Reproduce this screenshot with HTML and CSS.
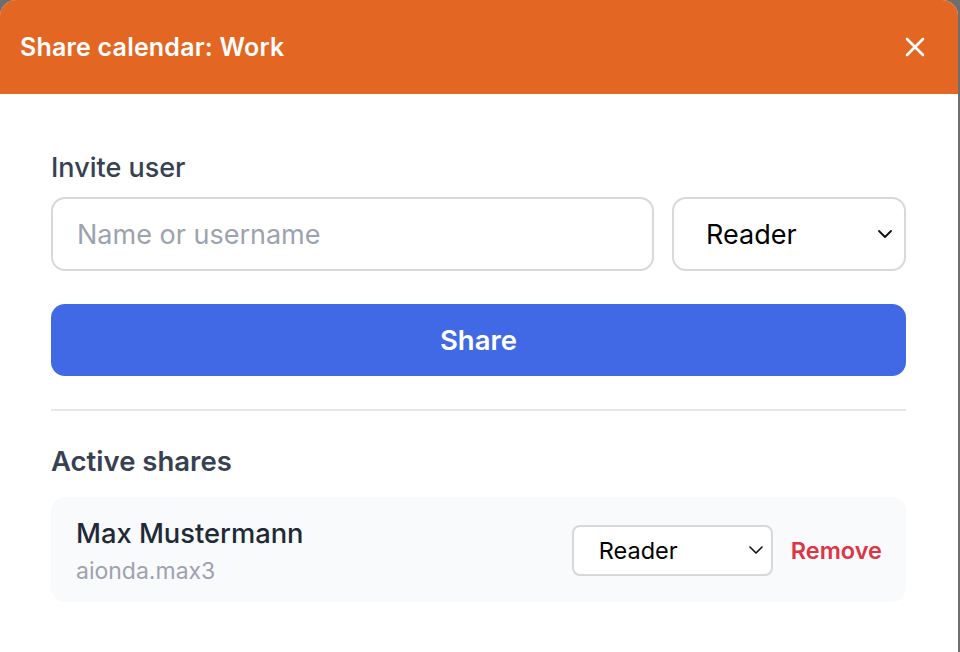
FILE: index.html
```html
<!DOCTYPE html>
<html lang="en">
<head>
<meta charset="utf-8">
<title>Share calendar</title>
<link rel="stylesheet" href="styles.css">
</head>
<body>
<div class="modal">
  <header class="modal-header">
    <h1 class="modal-title">Share calendar: Work</h1>
    <button class="close-btn" aria-label="Close">
      <svg width="20" height="20" viewBox="0 0 20 20"><path d="M2 2 L18 18 M18 2 L2 18" stroke="#fff" stroke-width="2.6" stroke-linecap="round" fill="none"/></svg>
    </button>
  </header>
  <div class="modal-body">
    <section class="invite">
      <div class="section-label">Invite user</div>
      <div class="invite-row">
        <input class="text-input" type="text" placeholder="Name or username">
        <div class="select big">
          <span>Reader</span>
          <svg width="14" height="8" viewBox="0 0 14 8"><path d="M1 1 L7 7 L13 1" stroke="#111" stroke-width="1.8" fill="none" stroke-linecap="round" stroke-linejoin="round"/></svg>
        </div>
      </div>
      <button class="share-btn">Share</button>
    </section>
    <hr class="divider">
    <section class="active">
      <div class="section-label strong">Active shares</div>
      <div class="share-card">
        <div class="user">
          <div class="user-name">Max Mustermann</div>
          <div class="user-id">aionda.max3</div>
        </div>
        <div class="share-actions">
          <div class="select small">
            <span>Reader</span>
            <svg width="14" height="8" viewBox="0 0 14 8"><path d="M1 1 L7 7 L13 1" stroke="#111" stroke-width="1.6" fill="none" stroke-linecap="round" stroke-linejoin="round"/></svg>
          </div>
          <button class="remove-btn">Remove</button>
        </div>
      </div>
    </section>
  </div>
</div>
</body>
</html>
```

FILE: styles.css
```css
* { box-sizing: border-box; }
html, body { margin: 0; padding: 0; }
body {
  background: #6e6e6e;
  font-family: Inter, "Noto Sans", sans-serif;
  height: 652px;
  overflow: hidden;
}
.modal {
  width: 958px;
  height: 652px;
  background: #fff;
  border-radius: 16px 16px 0 0;
  overflow: hidden;
}
.modal-header {
  height: 94px;
  background: #e36622;
  display: flex;
  align-items: center;
  justify-content: space-between;
  padding: 0 33px 0 20px;
}
.modal-title {
  margin: 0;
  color: #fff;
  font-size: 25px;
  font-weight: 600;
  letter-spacing: 0.2px;
}
.close-btn {
  background: none;
  border: 0;
  padding: 0;
  width: 20px;
  height: 20px;
  display: flex;
  cursor: pointer;
}
.modal-body {
  padding: 54px 52px 0 51px;
}
.section-label {
  font-size: 27px;
  line-height: 40px;
  font-weight: 500;
  color: #374151;
}
.section-label.strong { font-size: 27.5px; font-weight: 600; }
.invite-row {
  display: flex;
  gap: 18px;
  margin-top: 9px;
}
.text-input {
  flex: 1;
  height: 74px;
  border: 2px solid #d6d8dc;
  border-radius: 14px;
  padding: 0 24px;
  font-family: inherit;
  font-size: 27px;
  color: #111827;
  outline: none;
}
.text-input::placeholder { color: #9ca3af; }
.select {
  display: flex;
  align-items: center;
  justify-content: space-between;
  background: #fff;
  border: 2px solid #d6d8dc;
  color: #000;
}
.select.big {
  width: 234px;
  height: 74px;
  border-radius: 14px;
  padding: 0 12px 0 32px;
  font-size: 27px;
}
.select.small {
  width: 201px;
  height: 51px;
  border-radius: 8px;
  padding: 0 8px 0 25px;
  font-size: 23.5px;
}
.share-btn {
  display: block;
  width: 100%;
  height: 72px;
  margin-top: 33px;
  border: 0;
  border-radius: 14px;
  background: #4169e6;
  color: #fff;
  font-family: inherit;
  font-size: 27.5px;
  font-weight: 600;
}
.divider {
  margin: 33px 0 0;
  border: 0;
  height: 2px;
  background: #e5e7eb;
}
.active { margin-top: 30px; }
.share-card {
  margin-top: 16px;
  background: #f9fafb;
  border-radius: 14px;
  padding: 16px 24px 15px 25px;
  display: flex;
  align-items: center;
  justify-content: space-between;
}
.user-name {
  font-size: 27.3px;
  line-height: 42px;
  font-weight: 500;
  color: #1f2937;
}
.user-id {
  font-size: 23px;
  line-height: 32px;
  color: #9ca3af;
}
.share-actions {
  display: flex;
  align-items: center;
  gap: 18px;
}
.remove-btn {
  background: none;
  border: 0;
  padding: 0;
  font-family: inherit;
  font-size: 23.5px;
  font-weight: 600;
  color: #dc3545;
}
```
